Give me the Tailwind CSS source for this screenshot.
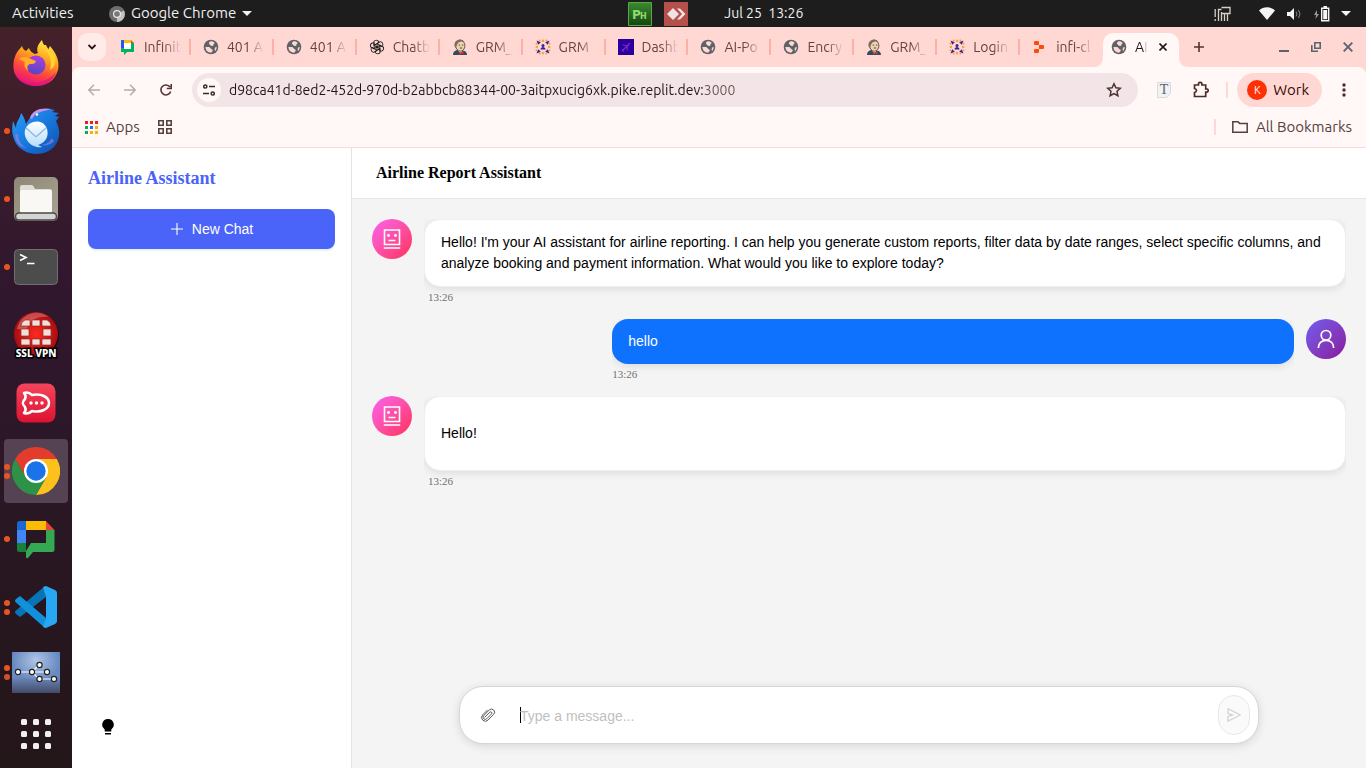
<!DOCTYPE html>
<html lang="en">
<head>
<meta charset="utf-8">
<meta name="viewport" content="width=device-width, initial-scale=1">
<title>Airline Report Assistant</title>
<script src="https://cdn.jsdelivr.net/npm/@tailwindcss/browser@4"></script>
</head>
<body class="flex h-screen flex-col overflow-hidden bg-white font-['Ubuntu','Noto_Sans',sans-serif] text-[15px]">

<svg class="absolute size-0" aria-hidden="true">
  <defs>
    <linearGradient id="gFox" x1="0.7" y1="0" x2="0.3" y2="1"><stop offset="0" stop-color="#fff14a"/><stop offset=".35" stop-color="#ffa61e"/><stop offset=".65" stop-color="#ff4b3a"/><stop offset="1" stop-color="#e60c83"/></linearGradient>
    <linearGradient id="gOrb" x1="0.6" y1="0" x2="0.4" y2="1"><stop offset="0" stop-color="#a93fe0"/><stop offset="1" stop-color="#5547c4"/></linearGradient>
    <linearGradient id="gBird" x1="0" y1="0" x2="1" y2="1"><stop offset="0" stop-color="#2aa2ff"/><stop offset=".6" stop-color="#1570d6"/><stop offset="1" stop-color="#0d4fa8"/></linearGradient>
    <linearGradient id="gMail" x1="0" y1="0" x2="0" y2="1"><stop offset="0" stop-color="#ffffff"/><stop offset="1" stop-color="#b4dcfb"/></linearGradient>
    <linearGradient id="gFile" x1="0" y1="0" x2="1" y2="1"><stop offset="0" stop-color="#8d8775"/><stop offset="1" stop-color="#a9a393"/></linearGradient>
    <radialGradient id="gSsl"><stop offset="0" stop-color="#ff2a20"/><stop offset="1" stop-color="#a80c10"/></radialGradient>
    <linearGradient id="gRocket" x1="0" y1="0" x2="0" y2="1"><stop offset="0" stop-color="#f5455c"/><stop offset="1" stop-color="#dc1330"/></linearGradient>
    <linearGradient id="gSky" x1="0" y1="0" x2="0" y2="1"><stop offset="0" stop-color="#6287c0"/><stop offset=".6" stop-color="#6b8bc0"/><stop offset="1" stop-color="#444a68"/></linearGradient>
    <radialGradient id="gSkyGlow" cx=".5" cy=".2" r=".5"><stop offset="0" stop-color="#c3d3ee" stop-opacity=".8"/><stop offset="1" stop-color="#c3d3ee" stop-opacity="0"/></radialGradient>
    <linearGradient id="gPh" x1="0" y1="0" x2="0" y2="1"><stop offset="0" stop-color="#3c8a31"/><stop offset="1" stop-color="#164413"/></linearGradient>
  </defs>
  <symbol id="globe" viewBox="0 0 16 16"><circle cx="8" cy="8" r="7.3" fill="#5f6368"/><path d="M2.400 8.100c1.500-.3 3.200-.3 4.300.2l1.300 1.500c.5.6 1.500.7 1.800 1.300.2.6-.8 1.700-1.600 2.700-3.200 0-5.500-2-5.800-5.700zM7.400 2.300c1.500-.3 3.400.4 4.300 1.500-.2.8-1.200 1-1.200 1.700.1.700-.4 1.200-1.200 1.400-.9.2-1.500-.2-1.900-.7-.4-.6-1.300-.4-1.500-1.100 0-1.100.4-2.300 1.500-2.800zM12.200 8.600l1.500-.9c0 2-.6 3.300-1.600 4.300-.6-.8-.6-2.300.1-3.400z" fill="#ffd8d3"/></symbol>
  <symbol id="butler" viewBox="0 0 16 16"><path d="M1 16c0-3 1.500-4 4-5l6 .5c2.500.7 4 1.800 4 4.500z" fill="#35485c"/><path d="M6 11l2 4 3-4z" fill="#fff"/><ellipse cx="8.300" cy="6.700" rx="4.600" ry="5.500" fill="#efd3b0" stroke="#40352e" stroke-width=".8"/><path d="M3.500 9C1.500 6 2.500 1.800 6 .9c3-.9 5.300.1 6.400 2.100C9 1.500 6 3 5.300 5.200z" fill="#7b6b62"/><path d="M6.700 6.100h1.400M9.900 6.100h1.400M7.800 9h2.400" stroke="#40352e" stroke-width=".9"/><path d="M7 12.500l2 1 2.500-1.500v3.500L9 14.500l-2 1z" fill="#d33833"/></symbol>
  <symbol id="infini" viewBox="0 0 16 16"><path d="M8 0l1.600 2.800H6.400zM8 16l1.600-2.800H6.400zM0 8l2.800-1.600v3.200zM16 8l-2.800-1.600v3.200z" fill="#f59a23"/><path d="M1.500 1.500l4.300 1.700-2.600 2.600zM14.500 1.500l-4.300 1.700 2.600 2.600zM1.500 14.500l4.300-1.700-2.600-2.600zM14.500 14.500l-4.300-1.700 2.600-2.600z" fill="#392390"/><g fill="#f59a23"><circle cx="4.700" cy="1.400" r=".9"/><circle cx="11.300" cy="1.400" r=".9"/><circle cx="4.700" cy="14.600" r=".9"/><circle cx="11.300" cy="14.600" r=".9"/><circle cx="1.400" cy="4.700" r=".9"/><circle cx="1.400" cy="11.300" r=".9"/><circle cx="14.600" cy="4.700" r=".9"/><circle cx="14.600" cy="11.300" r=".9"/></g><circle cx="8" cy="6.400" r="1.500" fill="#392390"/><path d="M5.400 10.600c.3-1.700 1.200-2.700 2.600-2.700s2.300 1 2.600 2.700z" fill="#392390"/></symbol>
  <symbol id="bot" viewBox="0 0 18 20"><g fill="none" stroke="#fff" stroke-width="1.600"><path d="M1.500 1h15v14.500h-15zM.8 19h16.400M5.500 11.500h7"/></g><circle cx="5.500" cy="6.500" r="1.400" fill="#fff"/><circle cx="12.500" cy="6.500" r="1.400" fill="#fff"/></symbol>
</svg>

<!-- Desktop bar -->
<header class="grid h-[27px] shrink-0 grid-cols-[46%_1fr_auto] items-center bg-[#1d1d1d] text-[#f0f0f0]">
  <div class="flex items-center pl-3">
    <button class="w-[97px] text-left">Activities</button>
    <button class="flex items-center gap-1.5">
      <svg class="size-4" viewBox="0 0 16 16"><circle cx="8" cy="8" r="8" fill="#6e6e6e"/><path d="M8 8L15 4.500A8 8 0 0 1 8 16z" fill="#c2c2c2"/><circle cx="8" cy="8" r="4" fill="#e8e8e8"/><circle cx="8" cy="8" r="2.800" fill="#777"/></svg>
      <span>Google Chrome</span>
      <svg class="h-[5px] w-2.5" viewBox="0 0 10 5"><path d="M0 0h10L5 5z" fill="#f0f0f0"/></svg>
    </button>
  </div>
  <div class="flex items-center">
    <svg class="mr-3 size-6" viewBox="0 0 24 24"><path d="M.5.5h23v23H.5z" fill="url(#gPh)" stroke="#52ae3c"/><text x="4" y="17" font-family="DejaVu Sans" font-weight="bold" font-size="12" fill="#8edb6c">P</text><text x="12" y="17" font-family="DejaVu Sans" font-weight="bold" font-size="8" fill="#8edb6c">H</text></svg>
    <svg class="mr-9 size-6" viewBox="0 0 24 24"><path d="M0 0h24v24H0z" fill="#b5504b"/><path d="M3 12l6-6 6 6-6 6zM13 6.500h3l5.500 5.500-5.500 5.500h-3l5-5.500z" fill="#f0e4e2"/></svg>
    <time class="text-[14px] whitespace-pre">Jul 25  13:26</time>
  </div>
  <div class="flex items-center pr-[15px]">
    <svg class="mr-7 h-4 w-[17px]" viewBox="0 0 17 16" fill="none" stroke="#d4d0c4" stroke-width="1.300"><path d="M1.200 3v8M1.200 13v2M4.500 15V3.500h3M7.500 6v9M7.500 1.500h8.500v6H7.500M10.500 8v7M13.500 8v7"/></svg>
    <svg class="mr-3 h-[13px] w-4" viewBox="0 0 16 13"><path d="M0 3.500C4.500-.8 11.500-.8 16 3.500L8 13z" fill="#f5f5f5"/></svg>
    <svg class="mr-3 h-3 w-[15px]" viewBox="0 0 15 12"><path d="M0 4h3l4-4v12L3 8H0z" fill="#f5f5f5"/><path d="M9 3.500q2 2.500 0 5M11.500 2q3 4 0 8" fill="none" stroke="#888"/></svg>
    <svg class="mr-[11px] h-4 w-4" viewBox="0 0 16 16"><path d="M3 4L0 9h2l-.5 4L5 8H3z" fill="#999"/><path d="M7.700 2.200h7v12.500h-7zM9.500.7h3.500" fill="none" stroke="#f5f5f5" stroke-width="1.400"/><path d="M9.200 4h4v9.200h-4z" fill="#f5f5f5"/></svg>
    <svg class="h-[5px] w-2.5" viewBox="0 0 10 5"><path d="M0 0h10L5 5z" fill="#f5f5f5"/></svg>
  </div>
</header>

<div class="flex min-h-0 flex-1">

  <!-- Dock -->
  <nav aria-label="Dock" class="flex w-[72px] shrink-0 flex-col bg-linear-to-b from-[#45212a] via-[#30172e] via-35% to-[#231619] pt-0.5">
    <button aria-label="Firefox" class="grid h-[68px] shrink-0 place-items-center">
      <svg class="size-12" viewBox="0 0 48 48"><path d="M6 12c1-2 3-3 4-5 1 3 2 4 4 5l3-3c1 3 3 5 6 6l3-1c-2-4 0-9 4-13 1 5 4 7 6 10l2-4c6 7 10 15 8 24-3 11-12 16-22 16S2 40 1.500 29C1 22 3 16 6 12z" fill="url(#gFox)"/><path d="M3 35c6 8 15 10 25 8 7-2 12-5 16-10-3 9-11 14-20 14S6 43 3 35z" fill="#e01282" opacity=".7"/><circle cx="24" cy="26" r="9.500" fill="url(#gOrb)"/><path d="M7 20c5-4 9-1 17 2-1 3-3 3-6 3-3 1-3 4-2 7-4-3-4-7-3-9z" fill="#ffae27"/><path d="M31 6c5 7 10 14 7 25 5-3 6-8 5-13-2-4-7-7-9-12z" fill="#ffd42f"/></svg>
    </button>
    <button aria-label="Thunderbird" class="relative grid h-[68px] shrink-0 place-items-center">
      <span class="absolute left-1 size-1.5 rounded-full bg-[#e95420]"></span>
      <svg class="size-12" viewBox="0 0 48 48"><path d="M9 6c4 5 4 8 5 11L19 9c5-7 14-8 24-6l-3 2 7 1-4 3 4 1-3 4c5 10 4 19-2 26-9 9-25 9-34 1C1 35-1 25 1 14l3 7C4 14 8 12 9 6z" fill="url(#gBird)"/><path d="M18 11C20 3 29 0 40 2 31 4 23 5 20 12z" fill="#c194ee"/><path d="M6 27q0 10 9 14Q4 40 3 28zM40 31c-3 5-6 6-10 7 5 1 10-1 12-4z" fill="#a77fe6" opacity=".6"/><path d="M13 23c4-11 19-11 22-1 3 11-6 15-9 16l4 2c-10 2-19-8-17-17z" fill="url(#gMail)"/><path d="M14 21l9 8q1 1 2 0l9-8" fill="none" stroke="#83b7e8" stroke-width="1.200"/><circle cx="25" cy="7.500" r="1.200" fill="#fff"/></svg>
    </button>
    <button aria-label="Files" class="relative grid h-[68px] shrink-0 place-items-center">
      <span class="absolute left-1 size-1.5 rounded-full bg-[#e95420]"></span>
      <svg class="size-12" viewBox="0 0 48 48"><rect x="2" y="2" width="44" height="44" rx="5" fill="url(#gFile)"/><path d="M8 12q0-2 2-2h9q2 0 3 2l1 2h15q2 0 2 2v20q0 2-2 2H10q-2 0-2-2z" fill="#deded7"/><rect x="8" y="15" width="32" height="23" rx="2" fill="#f9f8f5"/><rect x="3.500" y="38" width="41" height="7" rx="3.500" fill="#d4d4d4" stroke="#494842" stroke-width="1.500"/></svg>
    </button>
    <button aria-label="Terminal" class="relative grid h-[68px] shrink-0 place-items-center">
      <span class="absolute left-1 size-1.5 rounded-full bg-[#e95420]"></span>
      <svg class="size-12" viewBox="0 0 48 48"><rect x="2.500" y="6.500" width="43" height="35" rx="4" fill="#4c4c4c" stroke="#707070"/><path d="M8 11.500l6 3-6 3M15 20.500h7.500" fill="none" stroke="#fff" stroke-width="1.700"/></svg>
    </button>
    <button aria-label="SSL VPN" class="grid h-[68px] shrink-0 place-items-center">
      <svg class="size-12" viewBox="0 0 48 48"><circle cx="25" cy="24" r="22" fill="#170a0d"/><circle cx="24" cy="23" r="22" fill="url(#gSsl)"/><path d="M5 18A20 20 0 0 1 37 6Q20 4 14 19z" fill="#fff" opacity=".25"/><g fill="#f5ded8" stroke="#8a302a" stroke-width=".7"><path d="M13 9h5v6H9q0-4 4-6zM20 9h8v6h-8zM30 9h5q4 2 4 6h-9zM9 18h8v7H9zM31 18h8v7h-8zM9 28h9v6H9zM20 28h8v6h-8zM30 28h9v6h-9z"/></g><text x="24" y="46" text-anchor="middle" font-family="Noto Sans" font-size="10" font-weight="800" fill="#fff" stroke="#000" stroke-width="3" paint-order="stroke">SSL VPN</text></svg>
    </button>
    <button aria-label="Rocket.Chat" class="grid h-[68px] shrink-0 place-items-center">
      <svg class="size-12" viewBox="0 0 48 48"><rect x="4.500" y="4.500" width="39" height="39" rx="8" fill="url(#gRocket)"/><path d="M12 14c3-1 6 0 8 2 9-2 17 2 17 8s-8 10-17 8c-2 2-5 3-8 2 2-2 2-4 1-6-3-3-3-5 0-8 1-2 1-4-1-6z" fill="none" stroke="#fff" stroke-width="2.500" stroke-linejoin="round"/><g fill="#fff"><circle cx="19" cy="24" r="1.700"/><circle cx="24.500" cy="24" r="1.700"/><circle cx="30" cy="24" r="1.700"/></g></svg>
    </button>
    <button aria-label="Google Chrome" class="relative mx-1 my-0.5 grid h-16 shrink-0 place-items-center rounded-sm bg-[#554354]">
      <span class="absolute left-0 flex flex-col gap-[3px]"><span class="size-1.5 rounded-full bg-[#e95420]"></span><span class="size-1.5 rounded-full bg-[#e95420]"></span></span>
      <svg class="size-12" viewBox="0 0 48 48"><path d="M3.200 12A24 24 0 0 1 44.800 12H24L13.600 30z" fill="#e33b2e"/><path d="M44.800 12A24 24 0 0 1 24 48L34.400 30 24 12z" fill="#fcc21b"/><path d="M24 48A24 24 0 0 1 3.200 12L13.600 30q8 9 20.800 0z" fill="#2d9247"/><circle cx="24" cy="24" r="12" fill="#fff"/><circle cx="24" cy="24" r="9.700" fill="#1a73e8"/></svg>
    </button>
    <button aria-label="Google Chat" class="relative grid h-[68px] shrink-0 place-items-center">
      <span class="absolute left-1 size-1.5 rounded-full bg-[#e95420]"></span>
      <svg class="size-12" viewBox="0 0 48 48"><path d="M7.500 6H14v9H5V8.500Q5 6 7.500 6z" fill="#1967d2"/><path d="M14 6h20v9H14z" fill="#fbbc04"/><path d="M34 6l8.500 9H34z" fill="#ea4335"/><path d="M5 15h9v13H5z" fill="#4285f4"/><path d="M5 28h9v9H7.500Q5 37 5 34.500z" fill="#188038"/><path d="M34 15h8.500v19.500q0 2.500-2.500 2.500H21l-5 6q-2 1-2-1V36l5-8h15z" fill="#34a853"/></svg>
    </button>
    <button aria-label="Visual Studio Code" class="relative grid h-[68px] shrink-0 place-items-center">
      <span class="absolute left-1 flex flex-col gap-[3px]"><span class="size-1.5 rounded-full bg-[#e95420]"></span><span class="size-1.5 rounded-full bg-[#e95420]"></span></span>
      <svg class="size-12" viewBox="0 0 48 48"><path d="M34 14L8 34l-4-3q-2-2 0-3.500L33 3z" fill="#0874b8"/><path d="M34 35L8 13l-4 3q-2 2 0 3.500L33 45z" fill="#1390dc"/><path d="M34 3l9 4q2 1 2 3v28q0 2-2 3l-9 4-3-1 3-9V14l-3-10z" fill="#27a8f2"/></svg>
    </button>
    <button aria-label="Network graph" class="relative grid h-[62px] shrink-0 place-items-center">
      <span class="absolute left-1 flex flex-col gap-[3px]"><span class="size-1.5 rounded-full bg-[#e95420]"></span><span class="size-1.5 rounded-full bg-[#d1502a]"></span></span>
      <svg class="h-[41px] w-12" viewBox="0 0 48 41"><path d="M0 0h48v41H0z" fill="url(#gSky)"/><path d="M0 0h48v41H0z" fill="url(#gSkyGlow)"/><path d="M6 20h29M20 20l7-7M20 20l7 7h15" fill="none" stroke="#fff" stroke-width="1.200"/><g fill="#fff" stroke="#222" stroke-width="1.200"><circle cx="6" cy="20" r="2.600"/><circle cx="20" cy="20" r="2.600"/><circle cx="35" cy="20" r="2.600"/><circle cx="27.500" cy="13" r="2.600"/><circle cx="27.500" cy="27" r="2.600"/><circle cx="42" cy="27" r="2.600"/></g></svg>
    </button>
    <button aria-label="Show applications" class="grid min-h-0 flex-1 place-items-center pb-1">
      <svg class="size-[30px]" viewBox="0 0 30 30" fill="#f2f0ee"><rect width="6" height="6" rx="1.500"/><rect x="12" width="6" height="6" rx="1.500"/><rect x="24" width="6" height="6" rx="1.500"/><rect y="12" width="6" height="6" rx="1.500"/><rect x="12" y="12" width="6" height="6" rx="1.500"/><rect x="24" y="12" width="6" height="6" rx="1.500"/><rect y="24" width="6" height="6" rx="1.500"/><rect x="12" y="24" width="6" height="6" rx="1.500"/><rect x="24" y="24" width="6" height="6" rx="1.500"/></svg>
    </button>
  </nav>

  <div class="flex min-w-0 flex-1 flex-col">

    <!-- Tab strip -->
    <div class="flex h-10 shrink-0 items-center bg-[#ffd8d3] text-[14px] text-[#6b403c]">
      <button aria-label="Search tabs" class="mr-[9px] ml-1.5 grid size-7 shrink-0 place-items-center rounded-[10px] bg-[#ffebe8]">
        <svg class="size-2.5" viewBox="0 0 10 10"><path d="M1.500 3l3.500 3.500L8.500 3" fill="none" stroke="#2c1513" stroke-width="1.800"/></svg>
      </button>
      <div role="tablist" class="flex h-full min-w-0 flex-1 items-center">
        <button role="tab" class="flex min-w-0 flex-1 basis-0 items-center pl-[5px]"><svg class="mr-2 size-4 shrink-0" viewBox="0 0 16 16"><path d="M1 1h3v4H1z" fill="#1967d2"/><path d="M1 4h3v5H1z" fill="#2f4bff"/><path d="M4 1h7v3H4z" fill="#fbbc04"/><path d="M11 1l3 3h-3z" fill="#ea4335"/><path d="M11 4h3v9H7l-3 3v-3H1V9h3v1h7z" fill="#00b259"/><path d="M4 4h7v6H4z" fill="#fff"/></svg><span class="min-w-0 flex-1 overflow-hidden text-left whitespace-nowrap [mask-image:linear-gradient(to_right,#000_55%,transparent)]">Infinit</span><span class="ml-2 h-4 w-0.5 bg-[#ffb0a6]"></span></button>
        <button role="tab" class="flex min-w-0 flex-1 basis-0 items-center pl-3"><svg class="mr-2 size-4 shrink-0"><use href="#globe"/></svg><span class="min-w-0 flex-1 overflow-hidden text-left whitespace-nowrap [mask-image:linear-gradient(to_right,#000_55%,transparent)]">401 A</span><span class="ml-2 h-4 w-0.5 bg-[#ffb0a6]"></span></button>
        <button role="tab" class="flex min-w-0 flex-1 basis-0 items-center pl-3"><svg class="mr-2 size-4 shrink-0"><use href="#globe"/></svg><span class="min-w-0 flex-1 overflow-hidden text-left whitespace-nowrap [mask-image:linear-gradient(to_right,#000_55%,transparent)]">401 A</span><span class="ml-2 h-4 w-0.5 bg-[#ffb0a6]"></span></button>
        <button role="tab" class="flex min-w-0 flex-1 basis-0 items-center pl-3"><svg class="mr-2 size-4 shrink-0" viewBox="0 0 16 16"><g fill="none" stroke="#1b1717" stroke-width=".9"><path id="petal" d="M8 4.500l3.200-1.900q2.800.2 2.700 3.200-.2 1-1 1.700L8 4.700v3.300"/><use href="#petal" transform="rotate(60 8 8)"/><use href="#petal" transform="rotate(120 8 8)"/><use href="#petal" transform="rotate(180 8 8)"/><use href="#petal" transform="rotate(240 8 8)"/><use href="#petal" transform="rotate(300 8 8)"/></g></svg><span class="min-w-0 flex-1 overflow-hidden text-left whitespace-nowrap [mask-image:linear-gradient(to_right,#000_55%,transparent)]">Chatb</span><span class="ml-2 h-4 w-0.5 bg-[#ffb0a6]"></span></button>
        <button role="tab" class="flex min-w-0 flex-1 basis-0 items-center pl-3"><svg class="mr-2 size-4 shrink-0"><use href="#butler"/></svg><span class="min-w-0 flex-1 overflow-hidden text-left whitespace-nowrap [mask-image:linear-gradient(to_right,#000_55%,transparent)]">GRM_</span><span class="ml-2 h-4 w-0.5 bg-[#ffb0a6]"></span></button>
        <button role="tab" class="flex min-w-0 flex-1 basis-0 items-center pl-3"><svg class="mr-2 size-4 shrink-0"><use href="#infini"/></svg><span class="min-w-0 flex-1 overflow-hidden text-left whitespace-nowrap [mask-image:linear-gradient(to_right,#000_55%,transparent)]">GRM</span><span class="ml-2 h-4 w-0.5 bg-[#ffb0a6]"></span></button>
        <button role="tab" class="flex min-w-0 flex-1 basis-0 items-center pl-3"><svg class="mr-2 size-4 shrink-0" viewBox="0 0 16 16"><path d="M0 0h16v16H0z" fill="#2a009c"/><path d="M4 12l8-8M4.500 6l6 1M9 11.500L9.500 6M4 10.500l2 2" stroke="#8a1fd0" stroke-width="1.200"/></svg><span class="min-w-0 flex-1 overflow-hidden text-left whitespace-nowrap [mask-image:linear-gradient(to_right,#000_55%,transparent)]">Dashb</span><span class="ml-2 h-4 w-0.5 bg-[#ffb0a6]"></span></button>
        <button role="tab" class="flex min-w-0 flex-1 basis-0 items-center pl-3"><svg class="mr-2 size-4 shrink-0"><use href="#globe"/></svg><span class="min-w-0 flex-1 overflow-hidden text-left whitespace-nowrap [mask-image:linear-gradient(to_right,#000_55%,transparent)]">AI-Po</span><span class="ml-2 h-4 w-0.5 bg-[#ffb0a6]"></span></button>
        <button role="tab" class="flex min-w-0 flex-1 basis-0 items-center pl-3"><svg class="mr-2 size-4 shrink-0"><use href="#globe"/></svg><span class="min-w-0 flex-1 overflow-hidden text-left whitespace-nowrap [mask-image:linear-gradient(to_right,#000_55%,transparent)]">Encry</span><span class="ml-2 h-4 w-0.5 bg-[#ffb0a6]"></span></button>
        <button role="tab" class="flex min-w-0 flex-1 basis-0 items-center pl-3"><svg class="mr-2 size-4 shrink-0"><use href="#butler"/></svg><span class="min-w-0 flex-1 overflow-hidden text-left whitespace-nowrap [mask-image:linear-gradient(to_right,#000_55%,transparent)]">GRM_</span><span class="ml-2 h-4 w-0.5 bg-[#ffb0a6]"></span></button>
        <button role="tab" class="flex min-w-0 flex-1 basis-0 items-center pl-3"><svg class="mr-2 size-4 shrink-0"><use href="#infini"/></svg><span class="min-w-0 flex-1 overflow-hidden text-left whitespace-nowrap [mask-image:linear-gradient(to_right,#000_55%,transparent)]">Login</span><span class="ml-2 h-4 w-0.5 bg-[#ffb0a6]"></span></button>
        <button role="tab" class="flex min-w-0 flex-1 basis-0 items-center pl-3"><svg class="mr-2 size-4 shrink-0" viewBox="0 0 16 16" fill="#ff4a0a"><path d="M3 2h3q1 0 1 1v3H3Q2 6 2 5V3q0-1 1-1zM7 6h4q1 0 1 1v2q0 1-1 1H7zM3 10h4v3q0 1-1 1H3q-1 0-1-1v-2q0-1 1-1z"/></svg><span class="min-w-0 flex-1 overflow-hidden text-left whitespace-nowrap [mask-image:linear-gradient(to_right,#000_55%,transparent)]">infi-cl</span><span class="ml-2 w-0.5"></span></button>
        <div class="relative mt-1.5 flex h-[34px] w-[76px] shrink-0 items-center rounded-t-[10px] bg-[#fff8f6] pb-1.5 pl-2 text-[#241816]">
          <svg class="absolute bottom-0 -left-2.5 size-2.5" viewBox="0 0 10 10"><path d="M10 0v10H0Q10 10 10 0z" fill="#fff8f6"/></svg>
          <svg class="absolute -right-2.5 bottom-0 size-2.5" viewBox="0 0 10 10"><path d="M0 0v10h10Q0 10 0 0z" fill="#fff8f6"/></svg>
          <button role="tab" aria-selected="true" class="flex items-center gap-2"><svg class="size-4"><use href="#globe"/></svg><span class="w-3 overflow-hidden [mask-image:linear-gradient(to_right,#000_70%,transparent)]">AI</span></button>
          <button aria-label="Close tab" class="mr-3 ml-auto"><svg class="size-2" viewBox="0 0 8 8"><path d="M.5.5l7 7M7.500.5l-7 7" stroke="#241816" stroke-width="1.600"/></svg></button>
        </div>
      </div>
      <div class="flex w-[187px] shrink-0 items-center justify-between pr-[13px] pl-[15px]">
        <button aria-label="New tab"><svg class="size-2.5" viewBox="0 0 10 10"><path d="M5 0v10M0 5h10" stroke="#5c2f2b" stroke-width="1.600"/></svg></button>
        <div class="flex items-center gap-[22px]">
          <button aria-label="Minimize"><svg class="size-2.5" viewBox="0 0 10 10"><path d="M0 9h10" stroke="#5c6370" stroke-width="2"/></svg></button>
          <button aria-label="Restore"><svg class="size-2.5" viewBox="0 0 10 10"><path d="M3.800.8h5.400v5.400H3.800zM.8 3v6.200H7" fill="none" stroke="#5c6370" stroke-width="1.600"/></svg></button>
          <button aria-label="Close window"><svg class="size-2.5" viewBox="0 0 10 10"><path d="M.7.7l8.600 8.600M9.300.7L.7 9.300" stroke="#5c6370" stroke-width="1.900"/></svg></button>
        </div>
      </div>
    </div>

    <!-- Toolbar -->
    <div class="shrink-0 bg-[#ffd8d3]">
      <div class="flex h-[81px] flex-col rounded-t-lg border-b border-[#fadbd7] bg-[#fff8f6]">
        <div class="flex h-[46px] items-center pr-5 pl-4">
          <button aria-label="Back" class="mr-6"><svg class="size-3" viewBox="0 0 12 12"><path d="M12 6H1M6 .8L.8 6 6 11.200" fill="none" stroke="#b9a9a7" stroke-width="1.500"/></svg></button>
          <button aria-label="Forward" class="mr-6"><svg class="size-3" viewBox="0 0 12 12"><path d="M0 6h11M6 .8L11.200 6 6 11.200" fill="none" stroke="#b9a9a7" stroke-width="1.500"/></svg></button>
          <button aria-label="Reload" class="mr-5"><svg class="size-3" viewBox="0 0 12 12"><path d="M10.700 7.500A5 5 0 1 1 10 3M11.200 0v4.500H6.800" fill="none" stroke="#5a3430" stroke-width="1.600"/></svg></button>
          <div class="flex h-[34px] min-w-0 flex-1 items-center rounded-full bg-[#f3e4e7] pr-4 pl-[5px]">
            <button aria-label="Site information" class="grid size-6 shrink-0 place-items-center rounded-full bg-[#fff8f6]"><svg class="size-3" viewBox="0 0 12 12" fill="none" stroke="#3b2a28" stroke-width="1.500"><circle cx="2.300" cy="2.500" r="1.600"/><path d="M6 2.500h6M0 9.500h6"/><circle cx="9.700" cy="9.500" r="1.600"/></svg></button>
            <input type="text" aria-label="Address" class="ml-2 min-w-0 flex-1 bg-[linear-gradient(to_right,#1f1515_475px,#6b5555_475px)] bg-clip-text text-[14px] text-transparent outline-none" value="d98ca41d-8ed2-452d-970d-b2abbcb88344-00-3aitpxucig6xk.pike.replit.dev:3000">
            <button aria-label="Bookmark this tab"><svg class="size-4" viewBox="0 0 16 16"><path d="M8 1.800l1.900 4 4.400.5-3.300 3 .9 4.400L8 11.500l-3.900 2.200.9-4.400-3.300-3 4.400-.5z" fill="none" stroke="#4b3331" stroke-width="1.500"/></svg></button>
          </div>
          <button aria-label="Text extension" class="ml-[19px]"><svg class="h-4 w-3.5" viewBox="0 0 14 16"><path d="M.5.5h13v11l-4 4h-9z" fill="#f1f2f3" stroke="#d9dcde"/><text x="7" y="12" text-anchor="middle" font-family="Liberation Serif" font-size="14" fill="#5d6165">T</text></svg></button>
          <button aria-label="Extensions" class="ml-[21px]"><svg class="size-[18px]" viewBox="0 0 18 18"><path d="M2.500 4h4q-.3-2.700 1.700-2.700T9.900 4h3.800v4q2.500-.3 2.500 1.500T13.700 11.200V15.500H2.500v-4q2-.4 2-2t-2-2z" fill="none" stroke="#4b2b28" stroke-width="1.700"/></svg></button>
          <span class="ml-4 h-4 w-0.5 bg-[#ffd8d3]"></span>
          <button class="ml-[9px] flex h-[34px] items-center rounded-full bg-[#ffd8d3] pr-[13px] pl-2.5 text-[#3d0a06]"><span class="mr-1.5 grid size-5 place-items-center rounded-full bg-[#ff2f06] text-[11px] text-white">K</span>Work</button>
          <button aria-label="Menu" class="ml-5"><svg class="h-3.5 w-1" viewBox="0 0 4 14" fill="#4b2b28"><circle cx="2" cy="2" r="1.700"/><circle cx="2" cy="7" r="1.700"/><circle cx="2" cy="12" r="1.700"/></svg></button>
        </div>
        <div class="flex h-7 items-center pr-[14px] pl-[13px] text-[#57403e]">
          <a href="#" class="flex items-center gap-2"><svg class="size-[13px]" viewBox="0 0 13 13"><path d="M0 0h3v3H0zM5 0h3v3H5zM10 0h3v3h-3z" fill="#f21b1b"/><path d="M0 5h3v3H0zM0 10h3v3H0z" fill="#0fa958"/><path d="M5 5h3v3H5z" fill="#1a73e8"/><path d="M10 5h3v3h-3zM10 10h3v3h-3zM5 10h3v3H5z" fill="#fbaf00"/></svg>Apps</a>
          <button aria-label="Tab groups" class="ml-[18px]"><svg class="size-3.5" viewBox="0 0 14 14"><path d="M.8.8h4.400v4.400H.8zM8.800.8h4.400v4.400H8.800zM.8 8.800h4.400v4.400H.8zM8.800 8.800h4.400v4.400H8.800z" fill="none" stroke="#57403e" stroke-width="1.600"/></svg></button>
          <span class="ml-auto h-4 w-0.5 bg-[#ffd8d3]"></span>
          <button class="ml-4 flex items-center gap-2"><svg class="h-3 w-4" viewBox="0 0 16 12"><path d="M.8.800H6l1.600 1.600h7.600v8.800H.8z" fill="none" stroke="#57403e" stroke-width="1.500"/></svg>All Bookmarks</button>
        </div>
      </div>
    </div>

    <!-- Page -->
    <div class="flex min-h-0 flex-1 text-[14px]">
      <aside class="flex w-[280px] shrink-0 flex-col border-r border-[#e4e4e4] bg-white px-4 pt-5">
        <h1 class="font-['Liberation_Serif',serif] text-lg leading-5 font-bold text-[#4a63f8]">Airline Assistant</h1>
        <button class="mt-[21px] flex h-10 items-center justify-center gap-2 rounded-lg bg-[#4a63f8] font-['Liberation_Sans',sans-serif] text-white shadow-[0_2px_0_rgba(5,145,255,0.1)]">
          <svg class="size-3.5" viewBox="0 0 14 14"><path d="M7 1v12M1 7h12" stroke="#fff" stroke-width="1.100"/></svg>New Chat
        </button>
        <button aria-label="Toggle theme" class="mt-auto mb-[33px] ml-3.5 w-3"><svg class="h-4 w-3" viewBox="0 0 12 16"><path d="M6 0a5.700 5.700 0 0 1 3.300 10.400V12.500H2.700V10.400A5.700 5.700 0 0 1 6 0zM3 14h6v1.500H3z"/></svg></button>
      </aside>

      <main class="flex min-w-0 flex-1 flex-col bg-[#f4f4f4]">
        <header class="flex h-[51px] shrink-0 items-center border-b border-[#e6e6e6] bg-white px-6">
          <h2 class="font-['Liberation_Serif',serif] text-base font-bold text-black">Airline Report Assistant</h2>
        </header>

        <section aria-label="Conversation" class="flex min-h-0 flex-1 flex-col gap-4 p-5 font-['Liberation_Sans',sans-serif] leading-[21px] text-black">
          <article class="flex gap-3">
            <span class="grid size-10 shrink-0 place-items-center rounded-full bg-linear-135 from-[#fb5ff0] to-[#ff2a55]"><svg class="h-5 w-[18px]"><use href="#bot"/></svg></span>
            <div class="min-w-0 flex-1 overflow-hidden">
              <p class="rounded-2xl border border-[#efefef] bg-white px-4 py-3 shadow-[0_2px_8px_rgba(0,0,0,0.1)]">Hello! I'm your AI assistant for airline reporting. I can help you generate custom reports, filter data by date ranges, select specific columns, and analyze booking and payment information. What would you like to explore today?</p>
              <time class="mt-1 block pl-1 font-['Liberation_Serif',serif] text-[11px] leading-3 text-[#707070]">13:26</time>
            </div>
          </article>
          <article class="flex justify-end gap-3">
            <div class="w-[70%] overflow-hidden">
              <p class="rounded-2xl bg-[#0f72ff] px-4 py-3 text-white shadow-[0_2px_8px_rgba(0,0,0,0.1)]">hello</p>
              <time class="mt-1 block font-['Liberation_Serif',serif] text-[11px] leading-3 text-[#707070]">13:26</time>
            </div>
            <span class="grid size-10 shrink-0 place-items-center rounded-full bg-linear-135 from-[#6d5df0] to-[#8a0f9c]"><svg class="h-5 w-[18px]" viewBox="0 0 18 20" fill="none" stroke="#fff" stroke-width="1.700"><circle cx="9" cy="6.300" r="4.800"/><path d="M1.300 19c0-4.800 3.200-7.700 7.700-7.700s7.700 2.900 7.700 7.700"/></svg></span>
          </article>
          <article class="flex gap-3">
            <span class="grid size-10 shrink-0 place-items-center rounded-full bg-linear-135 from-[#fb5ff0] to-[#ff2a55]"><svg class="h-5 w-[18px]"><use href="#bot"/></svg></span>
            <div class="min-w-0 flex-1 overflow-hidden">
              <p class="rounded-2xl border border-[#efefef] bg-white px-4 py-[26px] shadow-[0_2px_8px_rgba(0,0,0,0.1)]">Hello!</p>
              <time class="mt-1 block pl-1 font-['Liberation_Serif',serif] text-[11px] leading-3 text-[#707070]">13:26</time>
            </div>
          </article>
        </section>

        <form class="mx-auto mb-6 flex h-[58px] w-full max-w-[800px] shrink-0 items-center rounded-3xl border border-[#d6d6d6] bg-white pr-2 pl-5 font-['Liberation_Sans',sans-serif] shadow-[0_2px_10px_rgba(0,0,0,0.12)]">
          <button type="button" aria-label="Attach file" class="mr-6"><svg class="size-4" viewBox="0 0 16 16" fill="none" stroke="#5a5a5a"><path d="M4.700 10.400l5.200-5.200a1.100 1.100 0 0 1 1.700 1.700L6.800 11.700a2.100 2.100 0 0 1-3.100-3.100L9.300 3a3.100 3.100 0 0 1 4.400 4.400L8 13.100a3.700 3.700 0 0 1-5.300-5.300L7.600 2.900"/></svg></button>
          <span class="h-4 w-px bg-black" aria-hidden="true"></span>
          <input type="text" aria-label="Message" placeholder="Type a message..." class="-ml-px min-w-0 flex-1 bg-transparent pt-0.5 outline-none placeholder:text-[#bfbfbf]">
          <button type="submit" aria-label="Send" class="grid h-10 w-8 place-items-center rounded-2xl border border-[#e8e8e8] bg-[#fafafa]"><svg class="size-3.5" viewBox="0 0 14 14"><path d="M1 .8L13.300 7 1 13.200V8.500L5.500 7 1 5.500z" fill="none" stroke="#d0d0d0" stroke-width="1.200"/></svg></button>
        </form>
      </main>
    </div>
  </div>
</div>
</body>
</html>
